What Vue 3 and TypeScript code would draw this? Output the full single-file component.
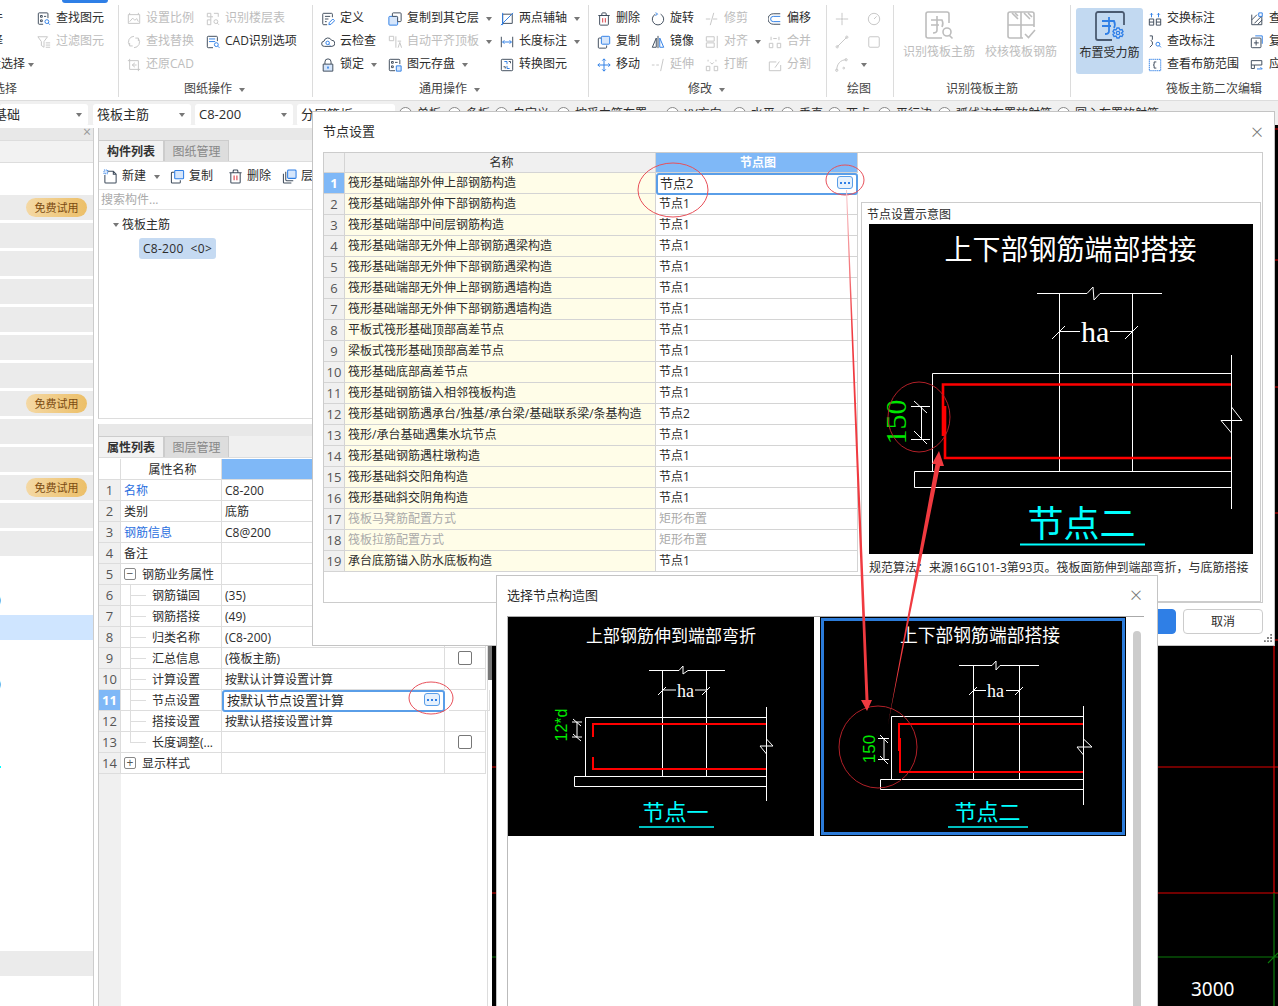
<script setup lang="ts">
interface Part { d: string; c?: string; f?: string; da?: string }
interface Tool { label?: string; icon: string; dis?: boolean; caret?: boolean; right?: boolean }

const B = '#2f7fe6'
const R = '#d9363e'
const G = '#c9ddf5'
const P = '#d6e6fb'

const icons: Record<string, Part[]> = {
  find: [{ d: 'M12.5 7V2a1 1 0 0 0-1-1h-9a1 1 0 0 0-1 1v11a1 1 0 0 0 1 1H7M4 4h2v2H4zM8 5h2.5M4 9h2v2H4z' }, { c: B, d: 'M13.5 11a2.2 2.2 0 1 1-4.4 0 2.2 2.2 0 0 1 4.4 0zM13 12.8l1.8 1.8' }],
  filter: [{ d: 'M1 2h11L8 7.5V14l-3-2V7.5zM10 9h5M10 11.5h5M10 14h5' }],
  ratio: [{ d: 'M1.5 3h13v10h-13zM3 1v2M13 1v2M3 11l3.5-4 2.5 2.5 2-2 2 3.5' }],
  floor: [{ d: 'M1.5 1.5h4v4h-4zM9 1.5h5v4M1.5 9h4v5.5h-4zM8 5.5H5.5M5.5 9V5.5' }, { d: 'M13.5 11a2.2 2.2 0 1 1-4.4 0 2.2 2.2 0 0 1 4.4 0zM13 12.8l1.8 1.8' }],
  swap: [{ d: 'M8 1.5A6.5 6.5 0 0 0 3 12M8 14.5A6.5 6.5 0 0 0 13 4M3 9v3.5h3.5M13 7V3.5H9.5' }],
  cad: [{ d: 'M13 7V2.5a1 1 0 0 0-1-1H2.5a1 1 0 0 0-1 1v11a1 1 0 0 0 1 1H8' }, { c: B, d: 'M3.5 4.500h7M3.5 7.500h7' }, { c: B, d: 'M14 11a2.2 2.2 0 1 1-4.4 0 2.2 2.2 0 0 1 4.4 0zM13.5 12.8l1.8 1.8' }],
  restore: [{ d: 'M3 1v12h12M1 3h12v12M6 8l3-2.5M6 8l3 2.5M6 8h5' }],
  define: [{ d: 'M13 6V2.5a1 1 0 0 0-1-1H3a1 1 0 0 0-1 1v11a1 1 0 0 0 1 1h4M4.5 5h6M4.5 8h4M4.5 11h2' }, { c: B, d: 'M9 14.5l.5-2.5 4-4 2 2-4 4z' }],
  cloud: [{ d: 'M4 13a3 3 0 0 1-.5-6A4.5 4.5 0 0 1 12 6a3.5 3.5 0 0 1 .5 7z' }, { c: B, d: 'M9.6 9a2 2 0 1 1-4 0 2 2 0 0 1 4 0zM9 10.6l1.5 1.5' }],
  lock: [{ d: 'M4.5 7V4.5a3.5 3.5 0 0 1 7 0V7' }, { f: P, d: 'M2.5 7h11v8h-11z' }, { c: B, d: 'M8 10v2.5M7 10.5h2' }],
  copyTo: [{ c: B, f: P, d: 'M2 5h8a1 1 0 0 1 1 1v8a1 1 0 0 1-1 1H2a1 1 0 0 1-1-1V6a1 1 0 0 1 1-1z' }, { f: '#fff', d: 'M6 1h8a1 1 0 0 1 1 1v8a1 1 0 0 1-1 1h-3V6a1 1 0 0 0-1-1H5V2a1 1 0 0 1 1-1z' }],
  copy: [{ d: 'M5 3.5h-2.5a1 1 0 0 0-1 1v9.5a1 1 0 0 0 1 1H10a1 1 0 0 0 1-1v-2' }, { c: B, f: P, d: 'M6 1.5h7.5a1 1 0 0 1 1 1v7a1 1 0 0 1-1 1H6a1 1 0 0 1-1-1v-7a1 1 0 0 1 1-1z' }],
  level: [{ d: 'M1.5 1.5h5v5h-5zM9 1.5v13M11 7h4M11.5 14.5l2-6 2 6' }],
  save: [{ d: 'M13.5 7V2.5a1 1 0 0 0-1-1h-10a1 1 0 0 0-1 1v11a1 1 0 0 0 1 1H8M4 4h2v2H4zM8 5h3M4 9h2v2H4z' }, { c: B, f: P, d: 'M9.5 9h5.5v6H9.5z' }],
  axis: [{ d: 'M3 2.5h11V13H3z' }, { c: B, d: 'M1 15L15 1M3 1v14' }],
  dim: [{ d: 'M1.5 2v12M14.5 2v12' }, { c: B, d: 'M3 8h10M5 6l-2 2 2 2M11 6l2 2-2 2' }],
  convert: [{ d: 'M2.5 1.5h11a1 1 0 0 1 1 1v11a1 1 0 0 1-1 1h-11a1 1 0 0 1-1-1v-11a1 1 0 0 1 1-1z' }, { c: B, d: 'M5 4h3v3M11 12H8V9' }, { d: 'M10 4h2v2M4 10h2v2' }],
  del: [{ d: 'M3 4h10v10a1 1 0 0 1-1 1H4a1 1 0 0 1-1-1zM1.5 4h13M5.5 4V2a1 1 0 0 1 1-1h3a1 1 0 0 1 1 1v2' }, { c: R, d: 'M6.5 7v5M9.5 7v5' }],
  move: [{ c: B, d: 'M8 1v14M1 8h14M6 3l2-2 2 2M6 13l2 2 2-2M3 6L1 8l2 2M13 6l2 2-2 2' }],
  rotate: [{ d: 'M5 2.5A6.5 6.5 0 1 0 11 2.5' }, { c: B, d: 'M5.5 0.5l2 2-2.5 1.5' }],
  mirror: [{ d: 'M8 1v14M6 3.5L1.5 14H6z' }, { c: B, d: 'M10 3.5L14.5 14H10z' }],
  extend: [{ d: 'M1 8h3M6 8h3M14 1l-3 14' }],
  trim: [{ d: 'M1 8h5M9 8h5M10 1L6 15' }],
  align: [{ d: 'M1.5 2h9v5h-9zM1.5 9h9v5h-9zM14 1v14' }],
  brk: [{ d: 'M1.5 9.5h4v5h-4zM10.5 9.5h4v5h-4zM3.5 2v2M12.5 2v2M6 5l2 2 2-2' }],
  offset: [{ d: 'M14 2H6a6 6 0 0 0 0 12h8' }, { c: B, d: 'M14 5H6a3 3 0 0 0 0 6h8' }],
  merge: [{ d: 'M1.5 9.5h4v5h-4zM10.5 9.5h4v5h-4zM3.5 2v4M12.5 2v4M6 4h4' }],
  split: [{ d: 'M1.5 4.5h8M14.5 8v6.5h-13v-10M8 11l5-7' }],
  point: [{ d: 'M8 1v5M8 10v5M1 8h5M10 8h5M7 7h2v2H7z' }],
  dial: [{ d: 'M14.5 8a6.5 6.5 0 1 1-13 0 6.5 6.5 0 0 1 13 0zM8 8l3-3' }],
  line: [{ d: 'M2.5 13.5L13.5 2.5M3.8 13.5a1.3 1.3 0 1 1-2.6 0 1.3 1.3 0 0 1 2.6 0zM14.8 2.5a1.3 1.3 0 1 1-2.6 0 1.3 1.3 0 0 1 2.6 0z' }],
  rect: [{ d: 'M3.5 2h9a1.5 1.5 0 0 1 1.5 1.5v9a1.5 1.5 0 0 1-1.5 1.5h-9A1.5 1.5 0 0 1 2 12.5v-9A1.5 1.5 0 0 1 3.5 2z' }],
  arc: [{ d: 'M2 14C2 7 6 2 13 2M3.3 14a1.3 1.3 0 1 1-2.6 0 1.3 1.3 0 0 1 2.6 0zM14 2a1.3 1.3 0 1 1-2.6 0 1.3 1.3 0 0 1 2.6 0zM11 11.5a1 1 0 1 1-2 0 1 1 0 0 1 2 0z' }],
  exchange: [{ d: 'M1.5 8h5v7h-5zM9.5 8h5v7h-5zM1.5 11.5h5M9.5 11.5h5' }, { c: B, d: 'M4 6V1.5M2.5 3L4 1.500 5.500 3M12 6V1.500M10.500 3L12 1.500 13.500 3' }],
  check: [{ d: 'M2 1h3v4L3.500 6.500 5 8v3l-3 3' }, { c: B, d: 'M13.5 10.500a2.200 2.200 0 1 1-4.400 0 2.200 2.200 0 0 1 4.400 0zM13 12.300l1.800 1.800' }],
  range: [{ c: B, da: '1.500 .7', d: 'M1.500 1.500h13v13h-13z' }, { d: 'M9.500 4.500H7v3L6 8l1 .5v3h2.500' }],
  hatch: [{ d: 'M2 3v11.500h11.500V5M2 9l6-6M5 13l8-8M9 14l5-5' }, { c: B, d: 'M10 1h4v4h-4z' }],
  recopy: [{ c: B, d: 'M6 1h8v9' }, { d: 'M2.500 3.500h9a1 1 0 0 1 1 1v9a1 1 0 0 1-1 1h-9a1 1 0 0 1-1-1v-9a1 1 0 0 1 1-1zM7 6v6M4.500 9H10' }],
  apply: [{ d: 'M1.500 3h12v5H5v4H1.500zM1.500 8H5' }, { c: B, d: 'M8 12.500h6l-2-2' }],
  blank: [{ d: 'M4 2.5h7l3 3V14a1 1 0 0 1-1 1H3a1 1 0 0 1-1-1V6.5M11 2.5v3h3' }, { c: B, f: P, da: '1 1', d: 'M1 1h4v4H1z' }],
  layercopy: [{ d: 'M1.5 5v9a1 1 0 0 0 1 1H10M4 3v8.5a1 1 0 0 0 1 1h7' }, { c: B, f: P, d: 'M7 1h7a1 1 0 0 1 1 1v7a1 1 0 0 1-1 1H7a1 1 0 0 1-1-1V2a1 1 0 0 1 1-1z' }]
}

const groups = [
  {
    w: 119, pad: 0, label: '', cols: [
      { w: 37, tools: [{ label: '构件', icon: '', right: true }, { label: '选择', icon: '', right: true }, { label: '批量选择', icon: '', right: true, caret: true }] as Tool[] },
      { w: 80, tools: [{ label: '查找图元', icon: 'find' }, { label: '过滤图元', icon: 'filter', dis: true }] as Tool[] }
    ]
  },
  {
    w: 194, pad: 8, label: '图纸操作', caret: true, cols: [
      { w: 79, tools: [{ label: '设置比例', icon: 'ratio', dis: true }, { label: '查找替换', icon: 'swap', dis: true }, { label: '还原CAD', icon: 'restore', dis: true }] as Tool[] },
      { w: 100, tools: [{ label: '识别楼层表', icon: 'floor', dis: true }, { label: 'CAD识别选项', icon: 'cad' }] as Tool[] }
    ]
  },
  {
    w: 276, pad: 8, label: '通用操作', caret: true, cols: [
      { w: 67, tools: [{ label: '定义', icon: 'define' }, { label: '云检查', icon: 'cloud' }, { label: '锁定', icon: 'lock', caret: true }] as Tool[] },
      { w: 112, tools: [{ label: '复制到其它层', icon: 'copyTo', caret: true }, { label: '自动平齐顶板', icon: 'level', dis: true, caret: true }, { label: '图元存盘', icon: 'save', caret: true }] as Tool[] },
      { w: 85, tools: [{ label: '两点辅轴', icon: 'axis', caret: true }, { label: '长度标注', icon: 'dim', caret: true }, { label: '转换图元', icon: 'convert' }] as Tool[] }
    ]
  },
  {
    w: 238, pad: 8, label: '修改', caret: true, cols: [
      { w: 54, tools: [{ label: '删除', icon: 'del' }, { label: '复制', icon: 'copy' }, { label: '移动', icon: 'move' }] as Tool[] },
      { w: 54, tools: [{ label: '旋转', icon: 'rotate' }, { label: '镜像', icon: 'mirror' }, { label: '延伸', icon: 'extend', dis: true }] as Tool[] },
      { w: 63, tools: [{ label: '修剪', icon: 'trim', dis: true }, { label: '对齐', icon: 'align', dis: true, caret: true }, { label: '打断', icon: 'brk', dis: true }] as Tool[] },
      { w: 54, tools: [{ label: '偏移', icon: 'offset' }, { label: '合并', icon: 'merge', dis: true }, { label: '分割', icon: 'split', dis: true }] as Tool[] }
    ]
  },
  {
    w: 67, pad: 8, label: '绘图', cols: [
      { w: 32, tools: [{ icon: 'point', dis: true }, { icon: 'line', dis: true }, { icon: 'arc', dis: true, caret: true }] as Tool[] },
      { w: 20, tools: [{ icon: 'dial', dis: true }, { icon: 'rect', dis: true }] as Tool[] }
    ]
  }
]

const lastCols = [
  { w: 102, tools: [{ label: '交换标注', icon: 'exchange' }, { label: '查改标注', icon: 'check' }, { label: '查看布筋范围', icon: 'range' }] as Tool[] },
  { w: 40, tools: [{ label: '查改布筋', icon: 'hatch' }, { label: '复制钢筋', icon: 'recopy' }, { label: '应用同名', icon: 'apply' }] as Tool[] }
]

const radios = [
  { t: '单板', w: 49 }, { t: '多板', w: 47 }, { t: '自定义', w: 62 }, { t: '按受力筋布置', w: 109 },
  { t: 'XY方向', w: 67 }, { t: '水平', w: 48 }, { t: '垂直', w: 47 }, { t: '两点', w: 50 },
  { t: '平行边', w: 60 }, { t: '弧线边布置放射筋', w: 119 }, { t: '圆心布置放射筋', w: 120 }
]

const badgeRows = [0, 7, 10]
const leftRows = Array.from({ length: 29 }, (_, i) => ({
  gray: i < 13 || i === 27,
  active: i === 15,
  badge: badgeRows.includes(i),
  text: i === 14 || i === 17 ? ')' : '',
  mark: i === 20
}))

const propRows = [
  { name: '名称', value: 'C8-200', blue: true },
  { name: '类别', value: '底筋' },
  { name: '钢筋信息', value: 'C8@200', blue: true },
  { name: '备注', value: '' },
  { name: '钢筋业务属性', value: '', box: '−' },
  { name: '钢筋锚固', value: '(35)', child: true },
  { name: '钢筋搭接', value: '(49)', child: true },
  { name: '归类名称', value: '(C8-200)', child: true },
  { name: '汇总信息', value: '(筏板主筋)', child: true, chk: true },
  { name: '计算设置', value: '按默认计算设置计算', child: true },
  { name: '节点设置', value: '按默认节点设置计算', child: true, sel: true },
  { name: '搭接设置', value: '按默认搭接设置计算', child: true },
  { name: '长度调整(...', value: '', child: true, chk: true, last: true },
  { name: '显示样式', value: '', box: '+' }
]

const nodeRows = [
  ['筏形基础端部外伸上部钢筋构造', '节点2'],
  ['筏形基础端部外伸下部钢筋构造', '节点1'],
  ['筏形基础端部中间层钢筋构造', '节点1'],
  ['筏形基础端部无外伸上部钢筋遇梁构造', '节点1'],
  ['筏形基础端部无外伸下部钢筋遇梁构造', '节点1'],
  ['筏形基础端部无外伸上部钢筋遇墙构造', '节点1'],
  ['筏形基础端部无外伸下部钢筋遇墙构造', '节点1'],
  ['平板式筏形基础顶部高差节点', '节点1'],
  ['梁板式筏形基础顶部高差节点', '节点1'],
  ['筏形基础底部高差节点', '节点1'],
  ['筏形基础钢筋锚入相邻筏板构造', '节点1'],
  ['筏形基础钢筋遇承台/独基/承台梁/基础联系梁/条基构造', '节点2'],
  ['筏形/承台基础遇集水坑节点', '节点1'],
  ['筏形基础钢筋遇柱墩构造', '节点1'],
  ['筏形基础斜交阳角构造', '节点1'],
  ['筏形基础斜交阴角构造', '节点1'],
  ['筏板马凳筋配置方式', '矩形布置', 'off'],
  ['筏板拉筋配置方式', '矩形布置', 'off'],
  ['承台底筋锚入防水底板构造', '节点1']
]
</script>

<template>
  <div class="screen">
    <div class="top-tab"></div>

    <!-- ribbon -->
    <div class="ribbon">
      <div v-for="g in groups" :key="g.w" class="group" :style="{ width: g.w + 'px', paddingLeft: g.pad + 'px' }">
        <div class="tools">
          <div v-for="(col, ci) in g.cols" :key="ci" class="col" :style="{ width: col.w + 'px' }">
            <div v-for="t in col.tools" :key="t.icon + t.label" class="tool" :class="{ dis: t.dis, right: t.right }">
              <svg v-if="t.icon" class="ic" viewBox="0 0 16 16" fill="none">
                <path v-for="p in icons[t.icon]" :key="p.d" :d="p.d" :fill="t.dis ? 'none' : p.f || 'none'" :stroke-dasharray="p.da" :stroke="p.c && !t.dis ? p.c : 'currentColor'" />
              </svg>
              <span v-if="t.label" class="tool-text">{{ t.label }}</span>
              <i v-if="t.caret" class="caret"></i>
            </div>
          </div>
        </div>
        <div class="glabel" :class="{ clip: !g.label, shift: g.pad }">
          {{ g.label || '框选择' }}<i v-if="g.caret" class="caret"></i>
        </div>
      </div>

      <div class="group big-group">
        <div class="tools big-tools">
          <div class="big dis">
            <svg class="big-ic" viewBox="0 0 30 30" fill="none" stroke="currentColor" stroke-width="1.6">
              <path d="M25 13V4a2 2 0 0 0-2-2H4a2 2 0 0 0-2 2v22a2 2 0 0 0 2 2h14" />
              <path d="M7 10h11c1 2 1 5 0 7M7 15h8M13 6v14c0 2-1 3-4 3" />
              <path d="M27 22a4 4 0 1 1-8 0 4 4 0 0 1 8 0zM25 25l3.5 3.5" />
            </svg>
            <span>识别筏板主筋</span>
          </div>
          <div class="big dis">
            <svg class="big-ic" viewBox="0 0 30 30" fill="none" stroke="currentColor" stroke-width="1.6">
              <path d="M17 28H4a2 2 0 0 1-2-2V4a2 2 0 0 1 2-2h22a2 2 0 0 1 2 2v13M15 2v26M2 15h26" />
              <path d="M6 3l6 6M9 3l3 3M18 3l6 6M22 3l4 4" />
              <path d="M19 24l3.5 3.5L29 20" />
            </svg>
            <span>校核筏板钢筋</span>
          </div>
        </div>
        <div class="glabel">识别筏板主筋</div>
      </div>

      <div class="group last-group">
        <div class="tools">
          <div class="big picked">
            <svg class="big-ic" viewBox="0 0 30 30" fill="none" stroke-width="1.8">
              <path stroke="#4a5a70" d="M29 14V3a2 2 0 0 0-2-2H3a2 2 0 0 0-2 2v24a2 2 0 0 0 2 2h14" />
              <path :stroke="B" d="M7 10h12c1 2 1 5 0 7M7 15h9M14 6v14c0 2-1 3-4 3" />
              <path :stroke="B" :fill="G" stroke-width="1.400" d="M24 17l1 2 2-.5 1 2-1.500 1.500 1.500 1.500-1 2-2-.5-1 2h-2l-1-2-2 .5-1-2 1.500-1.500-1.500-1.500 1-2 2 .5 1-2z" />
              <circle :stroke="B" stroke-width="1.200" cx="23" cy="22" r="1.700" />
            </svg>
            <span>布置受力筋</span>
          </div>
          <div v-for="(col, ci) in lastCols" :key="ci" class="col" :style="{ width: col.w + 'px' }">
            <div v-for="t in col.tools" :key="t.icon" class="tool">
              <svg class="ic" viewBox="0 0 16 16" fill="none">
                <path v-for="p in icons[t.icon]" :key="p.d" :d="p.d" :stroke-dasharray="p.da" :stroke="p.c || 'currentColor'" />
              </svg>
              <span class="tool-text">{{ t.label }}</span>
            </div>
          </div>
        </div>
        <div class="glabel last-label">筏板主筋二次编辑</div>
      </div>
    </div>

    <!-- selector bar -->
    <div class="selbar">
      <div class="sel s1">基础<i class="caret"></i></div>
      <div class="sel">筏板主筋<i class="caret"></i></div>
      <div class="sel">C8-200<i class="caret"></i></div>
      <div class="sel">分层筏板<i class="caret"></i></div>
      <div v-for="r in radios" :key="r.t" class="radio" :style="{ width: r.w + 'px' }">
        <span class="dot"></span>{{ r.t }}
      </div>
    </div>

    <div class="body">
      <!-- module list -->
      <aside class="left">
        <div class="strip"><span class="x">×</span></div>
        <div class="left-sub"></div>
        <div class="left-rows">
          <div v-for="(r, i) in leftRows" :key="i" class="lrow" :class="{ gray: r.gray, active: r.active }">
            <span v-if="r.text" class="cut">{{ r.text }}</span>
            <span v-if="r.mark" class="mark"></span>
            <span v-if="r.badge" class="badge">免费试用</span>
          </div>
        </div>
      </aside>

      <div class="mid">
        <section class="panel list-panel">
          <div class="strip"></div>
          <div class="tabs">
            <span class="tab on">构件列表</span>
            <span class="tab">图纸管理</span>
          </div>
          <div class="mini-bar">
            <span class="mini n1"><svg class="ic mic" viewBox="0 0 16 16" fill="none"><path v-for="p in icons.blank" :key="p.d" :d="p.d" :fill="p.f || 'none'" :stroke-dasharray="p.da" :stroke="p.c || 'currentColor'" /></svg>新建<i class="caret"></i></span>
            <span class="mini n2"><svg class="ic mic" viewBox="0 0 16 16" fill="none"><path v-for="p in icons.copy" :key="p.d" :d="p.d" :fill="p.f || 'none'" :stroke="p.c || 'currentColor'" /></svg>复制</span>
            <span class="mini n3"><svg class="ic mic" viewBox="0 0 16 16" fill="none"><path v-for="p in icons.del" :key="p.d" :d="p.d" :stroke="p.c || 'currentColor'" /></svg>删除</span>
            <span class="mini"><svg class="ic mic" viewBox="0 0 16 16" fill="none"><path v-for="p in icons.layercopy" :key="p.d" :d="p.d" :fill="p.f || 'none'" :stroke="p.c || 'currentColor'" /></svg>层间复制</span>
          </div>
          <div class="search">搜索构件...</div>
          <div class="tree">
            <div class="tree-root"><i class="tri"></i>筏板主筋</div>
            <div class="tree-leaf">C8-200<small>&lt;0&gt;</small></div>
          </div>
        </section>

        <section class="panel prop-panel">
          <div class="strip"></div>
          <div class="tabs">
            <span class="tab on">属性列表</span>
            <span class="tab">图层管理</span>
          </div>
          <div class="prow phead">
            <div class="pnum plain"></div>
            <div class="pname center">属性名称</div>
            <div class="pval blue-head"></div>
            <div class="pext"></div>
          </div>
          <div v-for="(r, i) in propRows" :key="i" class="prow">
            <div class="pnum" :class="{ on: r.sel }">{{ i + 1 }}</div>
            <div class="pname" :class="{ link: r.blue, child: r.child, last: r.last, folder: r.box }">
              <span v-if="r.box" class="fold">{{ r.box }}</span>{{ r.name }}
            </div>
            <div class="pval" :class="{ sel: r.sel }">
              {{ r.value }}
              <span v-if="r.sel" class="more"></span>
            </div>
            <div class="pext"><span v-if="r.chk" class="chk"></span></div>
          </div>
          <div class="gutter"></div>
        </section>
        <div class="thumb"></div>
      </div>

      <!-- drawing canvas -->
      <div class="canvas">
        <svg class="cad" viewBox="492 125 786 881" fill="none">
          <path stroke="#e00000" stroke-width="1.200" d="M492 767H1278M492 893H1278M1274 125V893" />
          <path stroke="#e00000" d="M1274 129h4M1274 260h4M1274 387h4M1274 513h4M1274 640h4" />
          <path stroke="#0a7a0a" stroke-width="1.200" d="M492 957H1278M1274 893V1006M1268 963l10-10" />
          <text x="1191" y="996" fill="#fff" class="cad-num">3000</text>
        </svg>
      </div>
    </div>

    <!-- node settings dialog -->
    <div class="dlg dlg-main">
      <div class="dlg-title">节点设置<span class="close">×</span></div>
      <div class="frame">
        <div class="ntable">
          <div class="nrow nhead">
            <div class="nnum"></div>
            <div class="nname head">名称</div>
            <div class="nval head on">节点图</div>
          </div>
          <div v-for="(r, i) in nodeRows" :key="i" class="nrow" :class="{ off: r[2] }">
            <div class="nnum" :class="{ on: i === 0 }">{{ i + 1 }}</div>
            <div class="nname">{{ r[0] }}</div>
            <div class="nval" :class="{ sel: i === 0 }">
              {{ r[1] }}
              <span v-if="i === 0" class="more"></span>
            </div>
          </div>
        </div>
        <div class="preview">
          <div class="preview-label">节点设置示意图</div>
          <svg class="draw big-draw" viewBox="869 224 384 330" fill="none">
            <rect x="869" y="224" width="384" height="330" fill="#000" />
            <text x="1070.500" y="260" class="d-title" font-size="28" text-anchor="middle">上下部钢筋端部搭接</text>
            <g stroke="#fff">
              <path d="M1037 293.500H1087L1093 287 1094 300 1100 293.500H1162M1059.500 293.500V471.500M1132.500 293.500V471.500" />
              <path d="M1060 331.500H1080M1110 331.500H1132M1052 339L1065 326M1125 339L1138 326" />
              <path d="M932.500 471.500V373.500H1231.500M914.500 471.500H1231.500V487.500H914.500zM1231.500 355V509" />
              <path d="M1231.500 407L1242 420.500H1221L1231.500 433" />
              <path d="M911 406.500H930M911 439.500H930M921.500 406.500V439.500M914 401L927 413M914 431L927 444" />
            </g>
            <text x="1081" y="342" class="d-serif" font-size="30">ha</text>
            <path stroke="#f00" stroke-width="2.600" d="M1231 384.500H943V436M945 406V458H1231" />
            <path stroke="#f00" stroke-width="4" d="M944 406V436" />
            <text class="d-green" font-size="30" text-anchor="middle" transform="translate(906 422) rotate(-90)">150</text>
            <text x="1081.500" y="537" class="d-cyan" font-size="36" text-anchor="middle">节点二</text>
            <path stroke="#0ff" stroke-width="2" d="M1020 544.500H1145" />
          </svg>
          <div class="rule-text">规范算法：来源16G101-3第93页。筏板面筋伸到端部弯折，与底筋搭接</div>
        </div>
      </div>
      <div class="dlg-foot">
        <span class="btn primary">确定</span>
        <span class="btn">取消</span>
      </div>
      <svg class="grip" viewBox="0 0 9 9" fill="#777"><path d="M7 0h2v2H7zM3.500 3.500h2v2h-2zM7 3.500h2v2H7zM0 7h2v2H0zM3.500 7h2v2h-2zM7 7h2v2H7z" /></svg>
    </div>

    <!-- node picker dialog -->
    <div class="dlg dlg-pick">
      <div class="dlg-title pick-title">选择节点构造图<span class="close">×</span></div>
      <div class="pick-list">
        <svg class="draw small-draw" viewBox="508 616 306 219" fill="none">
          <rect x="508" y="616" width="306" height="219" fill="#000" />
          <text x="671" y="640.500" class="d-title" font-size="17" text-anchor="middle">上部钢筋伸到端部弯折</text>
          <g stroke="#fff">
            <path d="M649 669.500H679L683 665 683 673 688 669.500H725M662.500 669.500V775M706.500 669.500V775" />
            <path d="M663 689H676M695 689H706M658 694L666 686M702 694L710 686" />
            <path d="M585.500 775V716.500H766.500M574.500 775.500H766.500V785.500H574.500zM766.500 706V800" />
            <path d="M766.500 738L773 745H760L766.500 753" />
            <path d="M572 721H582M572 736H582M577 721V736M573 718L581 725M573 733L581 740" />
          </g>
          <text x="677" y="696" class="d-serif-s" font-size="18">ha</text>
          <path stroke="#f00" stroke-width="2" d="M766 723H593V736M593 756V768H766" />
          <text class="d-green d-sans" font-size="16" text-anchor="middle" transform="translate(567 724) rotate(-90)">12*d</text>
          <text x="675.500" y="819" class="d-cyan" font-size="22" text-anchor="middle">节点一</text>
          <path stroke="#0ff" stroke-width="1.500" d="M639 826H714" />
        </svg>
        <div class="pick-on">
          <svg class="draw small-draw" viewBox="821 617 304 217" fill="none">
            <rect x="820" y="616" width="306" height="219" fill="#000" />
            <text x="980" y="641" class="d-title" font-size="17.800" text-anchor="middle">上下部钢筋端部搭接</text>
            <g stroke="#fff">
              <path d="M959 664.500H992L996 660 996 669 1000 664.500H1039M973.500 664.500V778M1019.500 664.500V778" />
              <path d="M974 689.500H986M1006 689.500H1019M969 694L977 686M1015 694L1023 686" />
              <path d="M891.500 778V715.500H1083.500M880.500 778.500H1083.500V788.500H880.500zM1083.500 705V804" />
              <path d="M1083.500 738L1092 746H1077L1083.500 754" />
              <path d="M878 737.500H889M878 758.500H889M884 737.500V758.500M880 734L888 742M880 755L888 763" />
            </g>
            <text x="987" y="696" class="d-serif-s" font-size="18">ha</text>
            <path stroke="#f00" stroke-width="2" d="M1083 723H899V750M900 737V771H1083" />
            <text class="d-green d-sans" font-size="17" text-anchor="middle" transform="translate(875 748) rotate(-90)">150</text>
            <text x="987.500" y="819" class="d-cyan" font-size="22" text-anchor="middle">节点二</text>
            <path stroke="#0ff" stroke-width="1.500" d="M948 826H1028" />
          </svg>
        </div>
      </div>
      <div class="scroll"></div>
    </div>

    <!-- red markup painted over the screenshot -->
    <svg class="markup" viewBox="0 0 1278 1006" fill="none">
      <defs>
        <linearGradient id="fade" gradientUnits="userSpaceOnUse" x1="0" y1="190" x2="0" y2="330">
          <stop offset="0" stop-color="#f8c8cc" />
          <stop offset="1" stop-color="#f03a40" />
        </linearGradient>
      </defs>
      <ellipse cx="673" cy="190" rx="35" ry="27" stroke="#e8505a" />
      <ellipse cx="845" cy="180" rx="19" ry="15" stroke="#e8505a" />
      <ellipse cx="431" cy="698" rx="22" ry="16" stroke="#e8505a" />
      <ellipse cx="919" cy="417" rx="31" ry="35" stroke="#b02028" />
      <ellipse cx="878" cy="747" rx="39" ry="41" stroke="#b02028" />
      <path fill="url(#fade)" d="M846 190H847L868.500 700H872L867 711 861 700H865.500z" />
      <path fill="#f03a40" d="M888 724L935.500 464H932L939 451 944 466H940z" />
    </svg>
  </div>
</template>

<style scoped>
.screen {
  position: relative;
  width: 1278px;
  height: 1006px;
  overflow: hidden;
  display: flex;
  flex-direction: column;
  background: #fff;
  color: #2c2c2c;
  font: 12px/1.2 "Open Sans", "Noto Sans CJK SC", sans-serif;
}

.top-tab {
  position: absolute;
  left: 62px;
  top: 0;
  width: 46px;
  height: 3px;
  background: #2f7fe6;
  border-radius: 0 0 4px 4px;
}

.caret {
  display: inline-block;
  width: 0;
  height: 0;
  margin-left: 7px;
  border: 3px solid transparent;
  border-top: 4px solid #777;
  border-bottom: 0;
  vertical-align: middle;
}

.ribbon {
  display: flex;
  height: 100px;
  flex: none;
}

.group {
  flex: none;
  height: 92px;
  margin-top: 5px;
  border-right: 1px solid #dcdcdc;
  box-sizing: border-box;
}

.tools {
  display: flex;
  height: 73px;
  padding-top: 2px;
}

.col {
  flex: none;
}

.tool {
  display: flex;
  align-items: center;
  height: 23px;
  white-space: nowrap;
}

.tool.dis,
.big.dis {
  color: #bdbdbd;
}

.tool.right {
  justify-content: flex-end;
  overflow: hidden;
  padding-right: 3px;
  width: 34px;
  box-sizing: border-box;
}

.tool.right:nth-child(1) .tool-text { margin-right: 28px; }
.tool.right:nth-child(2) .tool-text { margin-right: 28px; }
.tool.right .caret { margin-left: 3px; flex: none; }
.tool.right:nth-child(3) { padding-right: 0; }

.ic {
  width: 14px;
  height: 14px;
  flex: none;
  margin-right: 5px;
  color: #3f4c5c;
  stroke-width: 1.100;
}

.dis .ic {
  color: #c6c6c6;
}

.glabel {
  text-align: center;
  line-height: 18px;
  color: #444;
  white-space: nowrap;
}

.glabel.clip {
  width: 17px;
  overflow: hidden;
  direction: rtl;
  text-align: right;
}

.glabel.shift {
  padding-right: 10px;
}

.big-group {
  width: 177px;
}

.big-tools {
  padding-left: 4px;
}

.big {
  flex: none;
  width: 82px;
  display: flex;
  flex-direction: column;
  align-items: center;
  gap: 5px;
  padding-top: 3px;
  white-space: nowrap;
}

.big-ic {
  width: 30px;
  height: 30px;
}

.picked {
  width: 67px;
  height: 66px;
  margin: 1px 5px 0;
  background: #c2d9f1;
  border-radius: 3px;
  box-sizing: border-box;
}

.last-group {
  width: 207px;
  border-right: 0;
}

.last-label {
  padding-left: 79px;
}

.selbar {
  display: flex;
  align-items: flex-start;
  height: 25px;
  padding-top: 3px;
  background: #f0f0f0;
  border-top: 1px solid #ddd;
  box-sizing: border-box;
  flex: none;
  white-space: nowrap;
}

.sel {
  position: relative;
  flex: none;
  width: 98px;
  height: 22px;
  margin-right: 4px;
  padding: 3px 0 0 4px;
  box-sizing: border-box;
  background: #fff;
  border-radius: 3px;
  font-size: 13px;
}

.sel.s1 {
  width: 88px;
  padding-left: 0;
  margin-right: 5px;
  text-indent: -6px;
}

.sel .caret {
  position: absolute;
  right: 6px;
  top: 9px;
}

.radio {
  flex: none;
  display: flex;
  gap: 5px;
  padding-top: 3px;
}

.dot {
  width: 11px;
  height: 11px;
  border: 1px solid #888;
  border-radius: 50%;
  background: #fff;
  flex: none;
}

.body {
  display: flex;
  flex: 1;
  min-height: 0;
  background: #fff;
}

.strip {
  height: 12px;
  background: #e8e8e8;
  position: relative;
}

.left {
  flex: none;
  width: 94px;
  margin-top: 3px;
  border-right: 1px solid #ccc;
  box-sizing: border-box;
  overflow: hidden;
}

.x {
  position: absolute;
  right: 2px;
  top: -4px;
  color: #999;
  font-size: 14px;
}

.left-sub {
  height: 21px;
  background: #f2f2f2;
  border-top: 1px solid #ddd;
  border-bottom: 1px solid #ddd;
}

.left-rows {
  padding-top: 32px;
  display: flex;
  flex-direction: column;
  gap: 3px;
}

.lrow {
  display: flex;
  align-items: center;
  justify-content: flex-end;
  position: relative;
  flex: none;
  height: 25px;
  padding-right: 6px;
}

.lrow.gray {
  background: #ebebeb;
}

.lrow.active {
  background: #cfe5ff;
}

.cut {
  position: absolute;
  left: -3px;
  font-size: 13px;
}

.mark {
  position: absolute;
  left: 0;
  top: 11px;
  width: 1px;
  height: 2px;
  background: #0ff;
}

.badge {
  width: 61px;
  height: 19px;
  line-height: 19px;
  text-align: center;
  font-size: 11px;
  color: #7a4a10;
  border-radius: 10px;
  background: linear-gradient(90deg, #f4d8a4, #ecbf68);
}

.mid {
  position: relative;
  flex: none;
  width: 390px;
  margin: 3px 4px 0;
  display: flex;
  flex-direction: column;
  gap: 5px;
}

.thumb {
  position: absolute;
  left: 390px;
  top: 517px;
  width: 4px;
  height: 35px;
  background: #777;
}

.panel {
  border-left: 1px solid #ccc;
  border-right: 1px solid #ddd;
  box-sizing: border-box;
}

.list-panel {
  height: 291px;
  border-bottom: 1px solid #ddd;
}

.prop-panel {
  flex: 1;
  display: flex;
  flex-direction: column;
}

.gutter {
  flex: 1;
  width: 22px;
  background: #f0f0f0;
}

.tabs {
  display: flex;
  flex: none;
  height: 22px;
  margin-bottom: 1px;
  background: #f0f0f0;
  border-bottom: 1px solid #ddd;
  box-sizing: border-box;
}

.tab {
  width: 65px;
  text-align: center;
  line-height: 21px;
  color: #888;
  background: #ddd;
  border: 1px solid #ccc;
  border-bottom: 0;
  box-sizing: border-box;
}

.tab.on {
  color: #333;
  font-weight: 700;
  background: #f2f2f2;
  border-left: 0;
}

.mini-bar {
  display: flex;
  align-items: center;
  height: 27px;
  padding: 1px 0 0 4px;
  border-bottom: 1px solid #e4e4e4;
  box-sizing: border-box;
  white-space: nowrap;
}

.mini {
  display: flex;
  align-items: center;
}

.mini .caret {
  margin-left: 8px;
}

.mic {
  width: 15px;
  height: 15px;
  margin-right: 4px;
}

.n1 { width: 67px; }
.n2 { width: 58px; }
.n3 { width: 54px; }

.search {
  height: 19px;
  line-height: 19px;
  padding-left: 2px;
  color: #aaa;
  border-bottom: 1px solid #e4e4e4;
}

.tree {
  padding-top: 4px;
}

.tree-root {
  height: 21px;
  line-height: 21px;
  padding-left: 23px;
  display: flex;
  align-items: center;
}

.tri {
  width: 0;
  height: 0;
  margin-right: 3px;
  margin-left: -9px;
  border: 3.5px solid transparent;
  border-top: 4px solid #777;
  border-bottom: 0;
}

.tree-leaf {
  width: 77px;
  height: 21px;
  line-height: 21px;
  margin: 3px 0 0 40px;
  text-align: center;
  background: #c5daf2;
  border-radius: 3px;
  letter-spacing: 0.3px;
}

.tree-leaf small {
  margin-left: 7px;
  font-size: 12px;
}

.prow {
  display: flex;
  flex: none;
  height: 21px;
  line-height: 21px;
  white-space: nowrap;
}

.pnum {
  flex: none;
  width: 22px;
  text-align: center;
  background: #f0f0f0;
  border-right: 1px solid #ddd;
  border-bottom: 1px solid #ddd;
  box-sizing: border-box;
  font-size: 13px;
  color: #555;
}

.pnum.plain {
  background: #fff;
}

.pnum.on {
  background: #7fb8f7;
  color: #fff;
  font-weight: 700;
}

.pname {
  flex: none;
  position: relative;
  width: 101px;
  padding-left: 3px;
  border-right: 1px solid #ddd;
  border-bottom: 1px solid #ddd;
  box-sizing: border-box;
}

.pname.center {
  text-align: center;
}

.pname.link {
  color: #2a6fe0;
}

.pname.child {
  padding-left: 31px;
}

.pname.child::before {
  content: "";
  position: absolute;
  left: 9px;
  top: 0;
  bottom: -1px;
  width: 16px;
  border-left: 1px solid #ddd;
}

.pname.child::after {
  content: "";
  position: absolute;
  left: 9px;
  top: 10px;
  width: 16px;
  border-top: 1px solid #ddd;
}

.pname.last::before {
  bottom: 10px;
}

.pname.folder {
  padding-left: 21px;
}

.fold {
  position: absolute;
  left: 3px;
  top: 4px;
  width: 12px;
  height: 12px;
  line-height: 10px;
  text-align: center;
  border: 1px solid #888;
  border-radius: 2px;
  box-sizing: border-box;
  color: #555;
}

.pval {
  flex: none;
  position: relative;
  width: 223px;
  padding-left: 3px;
  border-right: 1px solid #ddd;
  border-bottom: 1px solid #ddd;
  box-sizing: border-box;
}

.pval.blue-head {
  background: #7fb8f7;
}

.pval.sel {
  display: flex;
  align-items: center;
  border: 2px solid #5a9ee8;
  padding-bottom: 4px;
  line-height: 13px;
}

.nval.sel {
  display: flex;
  align-items: center;
  border: 2px solid #5a9ee8;
  padding-left: 2px;
  padding-bottom: 5px;
  line-height: 13px;
}

.pext {
  flex: none;
  width: 41px;
  display: flex;
  align-items: center;
  justify-content: center;
  border-right: 1px solid #ddd;
  border-bottom: 1px solid #ddd;
  box-sizing: border-box;
}

.chk {
  width: 14px;
  height: 14px;
  border: 1px solid #777;
  border-radius: 2px;
  box-sizing: border-box;
}

.more {
  position: absolute;
  right: 3px;
  top: 1px;
  width: 16px;
  height: 13px;
  box-sizing: border-box;
  border: 1px solid #5a9ee8;
  border-radius: 3px;
  background: radial-gradient(circle, #2f7fe6 1px, transparent 1.300px) center / 4px 4px repeat-x #e6f1fd;
}

.canvas {
  flex: 1;
  min-width: 0;
  background: #000;
}

.cad {
  display: block;
  width: 100%;
  height: 100%;
}

.cad-num {
  font: 19px "Noto Sans", sans-serif;
}

.dlg {
  position: absolute;
  box-sizing: border-box;
  background: #fff;
  border: 1px solid #c4c4c4;
  display: flex;
  flex-direction: column;
}

.dlg-main {
  left: 312px;
  top: 111px;
  width: 963px;
  height: 535px;
  padding: 0 11px 0 10px;
}

.dlg-title {
  position: relative;
  flex: none;
  height: 40px;
  line-height: 39px;
  font-size: 13px;
}

.close {
  position: absolute;
  right: 0;
  top: 0;
  width: 16px;
  text-align: center;
  color: #777;
  font-size: 22px;
  font-weight: 300;
}

.dlg-main .close {
  right: -2px;
}

.frame {
  display: flex;
  align-items: flex-start;
  flex: none;
  height: 451px;
  border: 1px solid #ccc;
  box-sizing: border-box;
}

.ntable {
  flex: none;
  width: 534px;
}

.nrow {
  display: flex;
  height: 21px;
  line-height: 20px;
  white-space: nowrap;
}

.nhead {
  height: 20px;
}

.nrow.off {
  color: #aaa;
}

.nnum {
  flex: none;
  width: 21px;
  text-align: center;
  background: #f0f0f0;
  color: #555;
  font-size: 13px;
  border-right: 1px solid #d4d4d4;
  border-bottom: 1px solid #d4d4d4;
  box-sizing: border-box;
}

.nnum.on {
  background: #7fb8f7;
  color: #fff;
  font-weight: 700;
}

.nname {
  flex: none;
  width: 311px;
  padding-left: 3px;
  background: #fffde8;
  border-right: 1px solid #d4d4d4;
  border-bottom: 1px solid #d4d4d4;
  box-sizing: border-box;
}

.nname.head {
  background: #f0f0f0;
  text-align: center;
}

.nval {
  flex: none;
  position: relative;
  width: 202px;
  padding-left: 3px;
  border-right: 1px solid #d4d4d4;
  border-bottom: 1px solid #d4d4d4;
  box-sizing: border-box;
}

.nval.head {
  text-align: center;
}

.nval.head.on {
  background: #7fb8f7;
  color: #fff;
  font-weight: 700;
}

.preview {
  flex: none;
  width: 400px;
  height: 400px;
  margin: 49px 0 0 3px;
  padding: 0 5px;
  border: 1px solid #ccc;
  box-sizing: border-box;
}

.preview-label {
  height: 21px;
  line-height: 24px;
  font-size: 12px;
}

.big-draw {
  display: block;
  width: 384px;
  height: 330px;
  margin-left: 2px;
}

.draw {
  display: block;
}

.small-draw {
  width: 306px;
  height: 219px;
}

.rule-text {
  padding: 7px 0 0 2px;
  white-space: nowrap;
  font-size: 12px;
}

.dlg-foot {
  display: flex;
  justify-content: flex-end;
  gap: 7px;
  margin-top: 6px;
}

.btn {
  width: 80px;
  height: 25px;
  line-height: 23px;
  text-align: center;
  border: 1px solid #ccc;
  border-radius: 4px;
  box-sizing: border-box;
}

.btn.primary {
  background: #2f7fe6;
  border-color: #2f7fe6;
  color: #fff;
}

.grip {
  position: absolute;
  right: 2px;
  bottom: 3px;
  width: 8px;
  height: 8px;
}

.dlg-pick {
  left: 496px;
  top: 575px;
  width: 662px;
  height: 440px;
  padding: 0 12px 0 10px;
}

.pick-title {
  border-bottom: 1px solid #aaa;
  margin-right: 1px;
}

.pick-title .close {
  right: 0;
  top: -1px;
}

.pick-list {
  flex: 1;
  display: flex;
  gap: 6px;
  align-items: flex-start;
  border-left: 1px solid #bbb;
}

.pick-on {
  position: relative;
  width: 306px;
  height: 219px;
  box-sizing: border-box;
  border: 1px solid #000;
  outline: 3px solid #2b7bd9;
  outline-offset: -4px;
}

.pick-on .small-draw {
  width: 304px;
  height: 217px;
}

.scroll {
  position: absolute;
  left: 636px;
  top: 55px;
  width: 8px;
  bottom: 0;
  background: #ccc;
  border-radius: 4px;
}

.markup {
  position: absolute;
  inset: 0;
  width: 1278px;
  height: 1006px;
  pointer-events: none;
}

.d-title {
  fill: #fff;
  font-family: "Noto Sans CJK SC", sans-serif;
}

.d-serif,
.d-serif-s {
  fill: #fff;
  font-family: "Liberation Serif", serif;
}

.d-green {
  fill: #00e800;
  font-family: "Liberation Serif", serif;
}

.d-sans {
  font-family: "Liberation Sans", sans-serif;
}

.d-cyan {
  fill: #00ffff;
  font-family: "Noto Sans CJK SC", sans-serif;
}
</style>
